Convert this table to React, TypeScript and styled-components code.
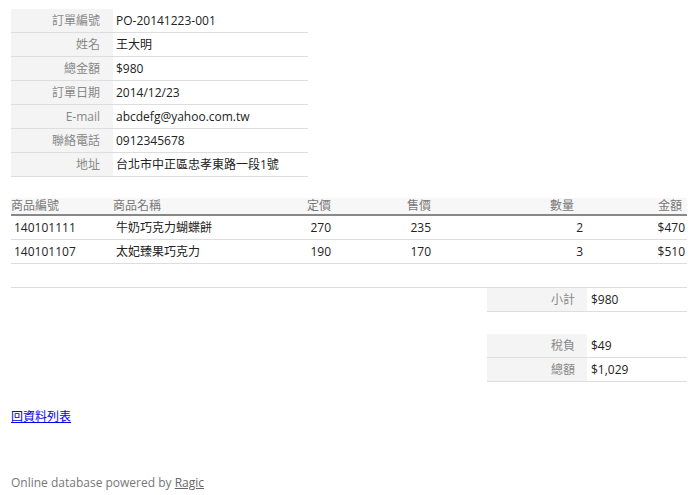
import React from 'react';
import styled, { createGlobalStyle } from 'styled-components';

const GlobalStyle = createGlobalStyle`
  body {
    margin: 8px;
    background: #fff;
    font-family: "Open Sans", "Noto Sans CJK TC", sans-serif;
    font-size: 12px;
    color: #222;
  }
`;

const Page = styled.div`
  width: 676px;
  margin-left: 3px;
  display: flex;
  flex-direction: column;
`;

const InfoTable = styled.div`
  width: 297px;
  margin-top: 1px;
  display: grid;
  grid-template-columns: 102px 1fr;
`;

const Label = styled.div`
  background: #f4f4f4;
  color: #888;
  text-align: right;
  padding-right: ${(p: { $pr?: number }) => p.$pr ?? 13}px;
  height: 24px;
  line-height: 23px;
  box-sizing: border-box;
  border-bottom: 1px solid #ddd;
`;

const Value = styled.div`
  color: #222;
  padding-left: ${(p: { $pl?: number }) => p.$pl ?? 3}px;
  height: 24px;
  line-height: 23px;
  box-sizing: border-box;
  border-bottom: 1px solid #ddd;
`;

const ItemsTable = styled.div`
  margin-top: 21px;
  display: grid;
  grid-template-columns: 102px 150px 71px 100px 152px 101px;
`;

const HeadCell = styled.div<{ $align?: string; $pad?: number }>`
  background: #f7f7f7;
  color: #777;
  height: 16px;
  line-height: 16px;
  border-bottom: 2px solid #888;
  text-align: ${p => p.$align ?? 'left'};
  padding-right: ${p => (p.$align === 'right' ? p.$pad ?? 3 : 0)}px;
`;

const Cell = styled.div<{ $align?: string; $pad?: number }>`
  height: 24px;
  line-height: 23px;
  box-sizing: border-box;
  border-bottom: 1px solid #ddd;
  color: #222;
  text-align: ${p => p.$align ?? 'left'};
  padding-left: ${p => (p.$align === 'right' ? 0 : 3)}px;
  padding-right: ${p => (p.$align === 'right' ? p.$pad ?? 3 : 0)}px;
`;

const Footer = styled.div`
  margin-top: 23px;
  border-top: 1px solid #ddd;
  display: flex;
  flex-direction: column;
  align-items: flex-end;
`;

const SumTable = styled.div<{ $mt?: number }>`
  width: 200px;
  margin-top: ${p => p.$mt ?? 0}px;
  display: grid;
  grid-template-columns: 100px 100px;
`;

const BackLink = styled.a`
  margin-top: 26px;
  color: #0000ee;
  text-decoration: underline;
  font-size: 12px;
  line-height: 17px;
  align-self: flex-start;
`;

const Powered = styled.div`
  margin-top: 49px;
  color: #777;
  font-size: 12px;
  line-height: 17px;

  a {
    color: #666;
    text-decoration: underline;
  }
`;

const info: [string, string][] = [
  ['訂單編號', 'PO-20141223-001'],
  ['姓名', '王大明'],
  ['總金額', '$980'],
  ['訂單日期', '2014/12/23'],
  ['E-mail', 'abcdefg@yahoo.com.tw'],
  ['聯絡電話', '0912345678'],
  ['地址', '台北市中正區忠孝東路一段1號'],
];

const items = [
  { id: '140101111', name: '牛奶巧克力蝴蝶餅', list: 270, sale: 235, qty: 2, amount: '$470' },
  { id: '140101107', name: '太妃臻果巧克力', list: 190, sale: 170, qty: 3, amount: '$510' },
];

export default function App() {
  return (
    <Page>
      <GlobalStyle />
      <InfoTable>
        {info.map(([k, v]) => (
          <React.Fragment key={k}>
            <Label>{k}</Label>
            <Value>{v}</Value>
          </React.Fragment>
        ))}
      </InfoTable>

      <ItemsTable>
        <HeadCell>商品編號</HeadCell>
        <HeadCell>商品名稱</HeadCell>
        <HeadCell $align="right" $pad={3}>定價</HeadCell>
        <HeadCell $align="right" $pad={3}>售價</HeadCell>
        <HeadCell $align="right" $pad={12}>數量</HeadCell>
        <HeadCell $align="right" $pad={5}>金額</HeadCell>
        {items.map(it => (
          <React.Fragment key={it.id}>
            <Cell>{it.id}</Cell>
            <Cell>{it.name}</Cell>
            <Cell $align="right" $pad={3}>{it.list}</Cell>
            <Cell $align="right" $pad={3}>{it.sale}</Cell>
            <Cell $align="right" $pad={3}>{it.qty}</Cell>
            <Cell $align="right" $pad={2}>{it.amount}</Cell>
          </React.Fragment>
        ))}
      </ItemsTable>

      <Footer>
        <SumTable>
          <Label $pr={12}>小計</Label>
          <Value $pl={4}>$980</Value>
        </SumTable>
        <SumTable $mt={22}>
          <Label $pr={12}>稅負</Label>
          <Value $pl={4}>$49</Value>
          <Label $pr={12}>總額</Label>
          <Value $pl={4}>$1,029</Value>
        </SumTable>
        <BackLink href="#">回資料列表</BackLink>
      </Footer>

      <Powered>
        Online database powered by <a href="#">Ragic</a>
      </Powered>
    </Page>
  );
}
